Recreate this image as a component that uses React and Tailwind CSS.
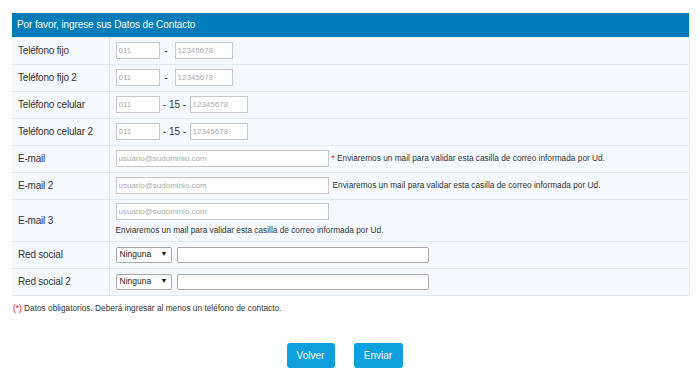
import React from "react";

const inputCls =
  "border border-[#c8c8c8] bg-white h-[17px] px-[2px] text-[8px] text-[#999] placeholder-[#aaa] outline-none";

const Row = ({ label, children, tall }) => (
  <tr className="border-t border-[#e2eaf1]">
    <td
      className={`w-[97px] pl-[6px] text-[10px] tracking-[-0.2px] text-[#333] border-r border-[#e2eaf1] ${
        tall ? "h-[42px]" : "h-[27px]"
      }`}
    >
      {label}
    </td>
    <td className="pl-[6px]">{children}</td>
  </tr>
);

const Phone = ({ cel }) => (
  <div className="flex items-center">
    <input className={`${inputCls} w-[44px]`} placeholder="011" />
    {cel ? (
      <span className="w-[30px] text-center text-[10px] text-[#333]">- 15 -</span>
    ) : (
      <span className="w-[15px] pl-[5px] text-[10px] text-[#333]">-</span>
    )}
    <input className={`${inputCls} w-[58px]`} placeholder="12345678" />
  </div>
);

const Email = ({ star, below }) => (
  <div className={below ? "flex flex-col" : "flex items-center"}>
    <input className={`${inputCls} w-[213px]`} placeholder="usuario@sudominio.com" />
    <span className={`text-[8.3px] text-[#333] ${below ? "mt-[4px]" : star ? "ml-[3px]" : "ml-[4px]"}`}>
      {star && <span className="text-[#e00]">* </span>}
      Enviaremos un mail para validar esta casilla de correo informada por Ud.
    </span>
  </div>
);

const Social = () => (
  <div className="flex items-center">
    <div className="w-[56px] h-[16px] border border-[#aaa] rounded-[2px] bg-white flex items-center justify-between px-[3px]">
      <span className="text-[8.5px] text-[#222]">Ninguna</span>
      <span className="text-[7px] text-[#111]">▼</span>
    </div>
    <input className="ml-[5px] w-[252px] h-[16px] border border-[#aaa] rounded-[2px] bg-white outline-none" />
  </div>
);

export default function App() {
  return (
    <div
      className="w-[700px] h-[375px] bg-white pt-[13px] px-[12px]"
      style={{ fontFamily: '"Liberation Sans", Arial, sans-serif' }}
    >
      <table className="w-[678px] border-collapse bg-[#f5f9fe] border-r border-b border-[#e0e7f1]">
        <thead>
          <tr>
            <th
              colSpan={2}
              className="h-[24px] bg-[#007db8] text-left pl-[5px] font-normal text-[10px] tracking-[-0.1px] text-white"
            >
              Por favor, ingrese sus Datos de Contacto
            </th>
          </tr>
        </thead>
        <tbody>
          <Row label="Teléfono fijo">
            <Phone />
          </Row>
          <Row label="Teléfono fijo 2">
            <Phone />
          </Row>
          <Row label="Teléfono celular">
            <Phone cel />
          </Row>
          <Row label="Teléfono celular 2">
            <Phone cel />
          </Row>
          <Row label="E-mail">
            <Email star />
          </Row>
          <Row label="E-mail 2">
            <Email />
          </Row>
          <Row label="E-mail 3" tall>
            <Email below />
          </Row>
          <Row label="Red social">
            <Social />
          </Row>
          <Row label="Red social 2">
            <Social />
          </Row>
        </tbody>
      </table>
      <p className="mt-[6px] ml-[1px] text-[8.3px] text-[#333]">
        <span className="text-[#e00]">(*)</span> Datos obligatorios. Deberá ingresar al menos un teléfono de contacto.
      </p>
      <div className="flex justify-center gap-[19px] mt-[29px] pr-[11px]">
        <button className="w-[48px] h-[25px] rounded-[3px] bg-[#0ea0dd] text-white text-[10px]">
          Volver
        </button>
        <button className="w-[49px] h-[25px] rounded-[3px] bg-[#0ea0dd] text-white text-[10px]">
          Enviar
        </button>
      </div>
    </div>
  );
}
